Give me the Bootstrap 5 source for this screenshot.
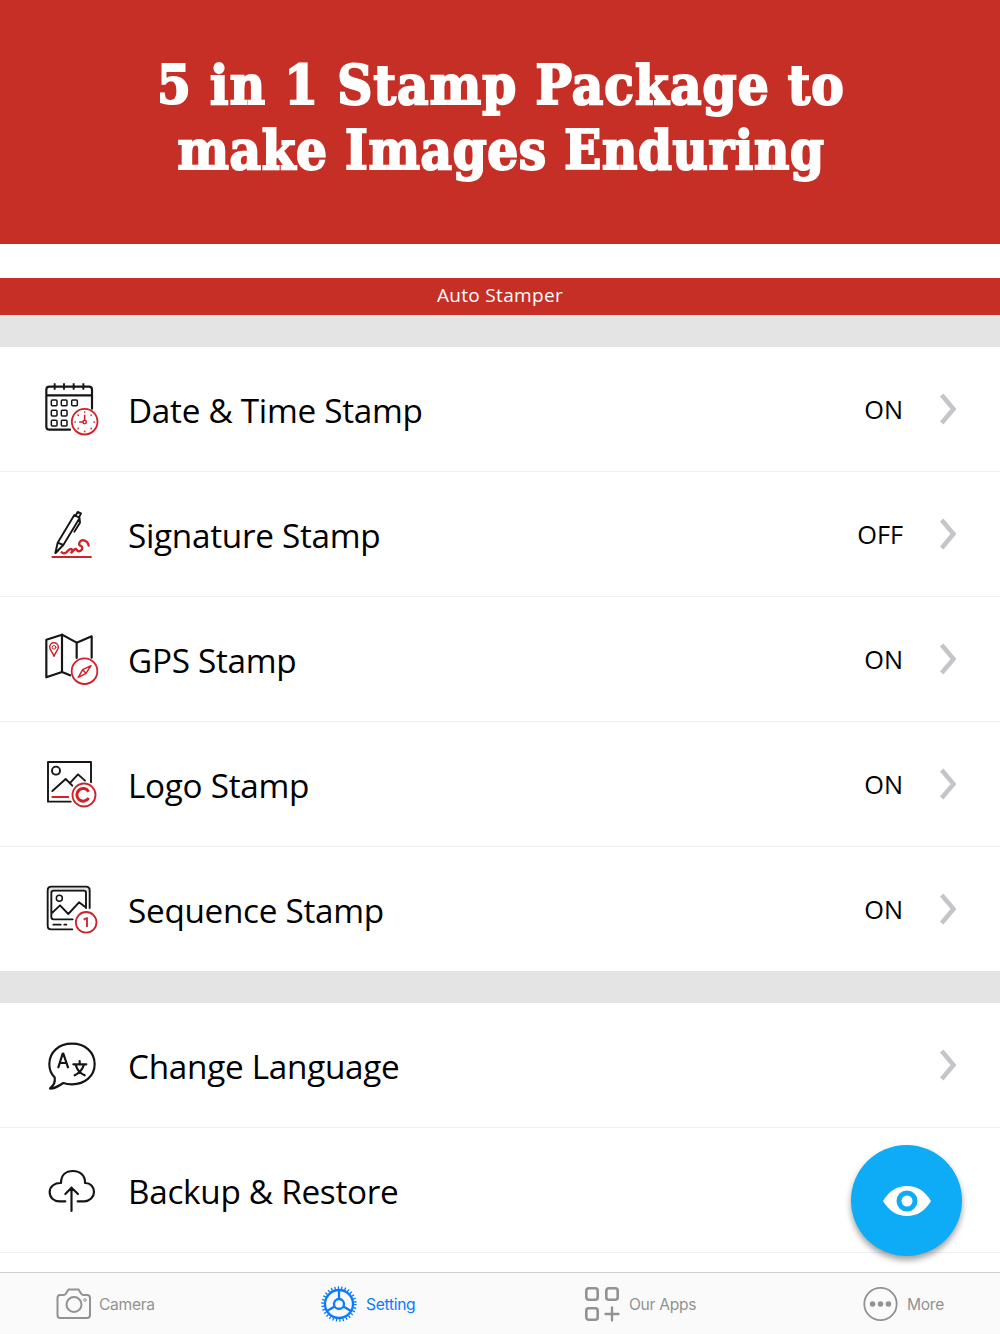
<!DOCTYPE html>
<html lang="en">
<head>
<meta charset="utf-8">
<title>Auto Stamper</title>
<meta name="viewport" content="width=device-width, initial-scale=1">
<link href="https://cdn.jsdelivr.net/npm/bootstrap@5.3.0/dist/css/bootstrap.min.css" rel="stylesheet">
<style>
  body { font-family: "Open Sans", "Noto Sans", sans-serif; color: #000; }
  .screen { width: 1000px; height: 1334px; overflow: hidden; }
  .brand-red { background: #c62f26; color: #fff; }
  .promo { height: 244px; padding: 53px 0 0 2px; }
  .promo h1 { font: 700 54px/65px "DejaVu Serif Condensed", "DejaVu Serif", serif; font-stretch: condensed; margin: 0; -webkit-text-stroke: 2px #fff; }
  .promo .line-a { letter-spacing: 1.15px; }
  .promo .line-b { letter-spacing: .65px; }
  .gap-strip { height: 34px; }
  .title-bar { height: 37px; font-size: 19px; font-weight: 500; line-height: 34px; letter-spacing: .33px; }
  .divider-band { height: 32px; background: #e4e4e4; }
  .divider-band.second { height: 31px; }
  .setting { height: 125px; border: 0; border-bottom: 1px solid #f1f1f4 !important; border-radius: 0; padding: 0 44px 0 30px; color: #000; }
  .setting.last-item { border-bottom-color: #e4e4e4 !important; }
  .setting svg.glyph { width: 90px; height: 80px; flex: none; margin-right: 8px; }
  .setting .label { font-size: 33.3px; line-height: 40px; padding-top: 1px; letter-spacing: -.29px; }
  .setting .state { font-size: 25.3px; line-height: 32px; margin-right: 37px; margin-top: -1px; }
  .setting svg.chev { width: 16px; height: 32px; flex: none; }
  .tabs { height: 62px; background: #fafafa; border-top: 1px solid #cfcfcf; z-index: 2; }
  .tabs .tab-item { color: #929292; font: 400 15.6px/20px Inter, Roboto, sans-serif; letter-spacing: -.3px; text-decoration: none; }
  .tabs .tab-item span { padding-top: 3px; }
  .tabs .tab-item.active { color: #0a7bff; }
  .eye-btn { right: 38px; bottom: 78px; width: 111px; height: 111px; background: #0eabf6; box-shadow: 0 4px 6px rgba(0,0,0,.38); z-index: 3; }
  .k { fill: none; stroke: #151515; stroke-width: 6.5; stroke-linejoin: round; stroke-linecap: round; }
  .r { fill: none; stroke: #cf2229; stroke-width: 5.5; stroke-linejoin: round; stroke-linecap: round; }
  .thin { stroke-width: 4.5; }
  .mid { stroke-width: 5.7; }
  .patch { fill: #fff; }
  .butt { stroke-linecap: butt; }
</style>
</head>
<body class="bg-white">
<div class="screen position-relative d-flex flex-column mx-auto">
  <header class="promo brand-red text-center flex-shrink-0">
    <h1><span class="line-a">5 in 1 Stamp Package to</span><br><span class="line-b">make Images Enduring</span></h1>
  </header>
  <div class="gap-strip flex-shrink-0"></div>
  <div class="title-bar brand-red text-center flex-shrink-0">Auto Stamper</div>
  <div class="divider-band flex-shrink-0"></div>

  <main class="flex-grow-1 overflow-hidden">
    <div class="list-group list-group-flush">
      <div class="setting list-group-item d-flex align-items-center">
        <svg class="glyph" viewBox="0 -3 270 240">
          <path class="k" d="M120 179H58q-9 0-9-9V59q0-9 9-9H177q9 0 9 9V116M49 76H186"/>
          <path class="k butt mid" d="M74 40V59M102 40V59M131 40V59M160 40V59"/>
          <g class="k thin"><rect x="64" y="90" width="17" height="17" rx="3"/><rect x="94" y="90" width="17" height="17" rx="3"/><rect x="125" y="90" width="17" height="17" rx="3"/><rect x="64" y="121" width="17" height="17" rx="3"/><rect x="94" y="121" width="17" height="17" rx="3"/><rect x="64" y="151" width="17" height="17" rx="3"/><rect x="94" y="151" width="17" height="17" rx="3"/></g>
          <circle class="r patch" cx="164" cy="155" r="38.500"/>
          <path class="r thin" d="M164 136V150M149 156H158M164 126v1M164 184v1M135 156h1M192 156h1M144 135l1 1M184 135l-1 1M144 176l1-1M184 176l-1-1"/>
          <circle class="r thin" cx="164" cy="156" r="5"/>
        </svg>
        <span class="label">Date &amp; Time Stamp</span><span class="state ms-auto">ON</span>
        <svg class="chev" viewBox="0 0 16 32"><path d="M1.700 2L13.500 16 1.700 30" fill="none" stroke="#c4c4c9" stroke-width="4.500"/></svg>
      </div>
      <div class="setting list-group-item d-flex align-items-center">
        <svg class="glyph" viewBox="0 -3 270 240">
          <path class="k mid" d="M76 174L83 143 133 60 149 69 100 150ZM83 143L100 150M77 174L85 166M138 60L143 51 153 55 147 67M149 72L150 83 133 110"/>
          <path class="r" style="stroke-width:7" d="M95 172C99 177 107 175 111 170S122 159 126 164 121 174 125 172 134 158 139 163 143 171 151 168C160 162 158 154 151 152 144 148 148 140 155 136 167 134 175 143 176 152 173 164"/>
          <path class="r butt" d="M65 186H185"/>
        </svg>
        <span class="label">Signature Stamp</span><span class="state ms-auto">OFF</span>
        <svg class="chev" viewBox="0 0 16 32"><path d="M1.700 2L13.500 16 1.700 30" fill="none" stroke="#c4c4c9" stroke-width="4.500"/></svg>
      </div>
      <div class="setting list-group-item d-flex align-items-center">
        <svg class="glyph" viewBox="0 -3 270 240">
          <path class="k" d="M120 166L96 156 49 172V59L96 44 140 68 185 49V113M96 44V156M140 68V114"/>
          <path class="r thin" d="M72 109C68 96 59 91 59 81a13 13 0 0 1 26 0C85 91 76 96 72 109Z"/>
          <circle class="r" style="stroke-width:3" cx="72" cy="82" r="5.500"/>
          <circle class="r patch" cx="163.500" cy="153.500" r="38.500"/>
          <path class="r thin" d="M183 137L168 160 145 172 158 149ZM158 149L168 160"/>
        </svg>
        <span class="label">GPS Stamp</span><span class="state ms-auto">ON</span>
        <svg class="chev" viewBox="0 0 16 32"><path d="M1.700 2L13.500 16 1.700 30" fill="none" stroke="#c4c4c9" stroke-width="4.500"/></svg>
      </div>
      <div class="setting list-group-item d-flex align-items-center">
        <svg class="glyph" viewBox="0 -3 270 240">
          <path class="k mid" d="M122 170H54V51H183V112"/>
          <circle class="k mid" cx="78" cy="77" r="12"/>
          <path class="k mid" d="M67 138L107 102 127 122M121 113L144 88 165 107"/>
          <path class="r" d="M67 156H115"/>
          <circle class="r patch" cx="162" cy="150" r="34.500"/>
          <path class="r butt" style="stroke-width:9" d="M176 140A19 19 0 1 0 176 159"/>
        </svg>
        <span class="label">Logo Stamp</span><span class="state ms-auto">ON</span>
        <svg class="chev" viewBox="0 0 16 32"><path d="M1.700 2L13.500 16 1.700 30" fill="none" stroke="#c4c4c9" stroke-width="4.500"/></svg>
      </div>
      <div class="setting last-item list-group-item d-flex align-items-center">
        <svg class="glyph" viewBox="0 -3 270 240">
          <path d="M53 60q0-9 9-9H170q9 0 9 9v5H53z" fill="#dfe2e0"/>
          <path class="k mid" d="M127 178H64q-11 0-11-11V61q0-11 11-11H168q11 0 11 11V114"/>
          <path class="k mid" d="M128 148H71q-7 0-7-7V69q0-7 7-7H161q7 0 7 7V114M64 131L90 106 115 132 147 97 167 112M70 164H92M103 164h6"/>
          <circle class="k thin" cx="88" cy="85" r="9"/>
          <circle class="r patch" cx="168.500" cy="157" r="31"/>
          <path class="r butt" d="M161 149L171 144V171"/>
        </svg>
        <span class="label">Sequence Stamp</span><span class="state ms-auto">ON</span>
        <svg class="chev" viewBox="0 0 16 32"><path d="M1.700 2L13.500 16 1.700 30" fill="none" stroke="#c4c4c9" stroke-width="4.500"/></svg>
      </div>
    </div>
    <div class="divider-band second"></div>
    <div class="list-group list-group-flush">
      <div class="setting list-group-item d-flex align-items-center">
        <svg class="glyph" viewBox="0 -15 270 240">
          <path class="k" d="M60 175C71 167 77 159 74 142C64 133 58 119 58 102C58 66 87 41 126 41S194 66 194 102 165 163 126 163C117 163 108 162 100 159C88 167 74 176 61 176Z"/>
          <path class="k" d="M85 112L98 71H100L114 112M89 99H109M130 103H169M149 93V102M137 104C141 119 151 130 164 136M162 104C157 119 147 130 134 136"/>
        </svg>
        <span class="label">Change Language</span>
        <svg class="chev ms-auto" viewBox="0 0 16 32"><path d="M1.700 2L13.500 16 1.700 30" fill="none" stroke="#c4c4c9" stroke-width="4.500"/></svg>
      </div>
      <div class="setting list-group-item d-flex align-items-center">
        <svg class="glyph" viewBox="0 -15 270 240">
          <path class="k" d="M106 139H88C71 139 59 128 59 111S75 83 93 84C93 61 107 48 129 48S166 62 165 84C181 83 192 96 192 111S179 139 163 139H143M124.500 168V98M106 117L124.500 98 144 117"/>
        </svg>
        <span class="label">Backup &amp; Restore</span>
      </div>
    </div>
  </main>

  <button type="button" class="eye-btn btn rounded-circle border-0 p-0 position-absolute d-flex align-items-center justify-content-center" aria-label="Preview">
    <svg width="50" height="32" viewBox="0 0 50 32"><path d="M1 16C7 6 15 1 25 1s18 5 24 15C43 26 35 31 25 31S7 26 1 16Z" fill="#fff"/><circle cx="25" cy="16" r="8" fill="#fff" stroke="#0eabf6" stroke-width="5"/></svg>
  </button>

  <nav class="tabs position-relative d-flex flex-shrink-0" aria-label="Main">
    <a href="#" class="tab-item d-flex align-items-center" style="margin-left:56px;width:265px">
      <svg width="36" height="36" viewBox="0 0 36 36" fill="none" stroke="#929292" stroke-width="2"><path d="M4 9H7.500Q9 9 10 7.500L12.500 3.500H22.500L25 7.500Q26 9 27.500 9H31Q34 9 34 12V29Q34 32 31 32H4Q1.500 32 1.500 29V12Q1.500 9 4 9Z"/><circle cx="18" cy="18.500" r="7.500"/><circle cx="29" cy="14" r="1.300" stroke-width="1"/></svg>
      <span style="margin-left:7px">Camera</span></a>
    <a href="#" class="tab-item active d-flex align-items-center" style="width:263px">
      <svg width="36" height="36" viewBox="0 0 36 36" fill="none" stroke="#0a7bff" stroke-width="2.300"><circle cx="18" cy="18" r="14"/><circle cx="18" cy="18" r="5"/><path d="M18 13V4M13.600 20.500L6 25M22.400 20.500L30 25"/><circle cx="18" cy="18" r="16.300" stroke-width="2.800" stroke-dasharray="1.300 2.114"/></svg>
      <span style="margin-left:9px">Setting</span></a>
    <a href="#" class="tab-item d-flex align-items-center" style="width:278px">
      <svg width="36" height="36" viewBox="0 0 36 36" fill="none" stroke="#929292" stroke-width="2.600"><rect x="2.300" y="2.300" width="11.400" height="11.400" rx="2.500"/><rect x="22.300" y="2.300" width="11.400" height="11.400" rx="2.500"/><rect x="2.300" y="22.300" width="11.400" height="11.400" rx="2.500"/><path d="M28 21.500V34.500M21.500 28H34.500" stroke-linecap="round" stroke-width="2.300"/></svg>
      <span style="margin-left:9px">Our Apps</span></a>
    <a href="#" class="tab-item d-flex align-items-center">
      <svg width="36" height="36" viewBox="0 0 36 36"><circle cx="18.500" cy="18" r="16.200" fill="none" stroke="#929292" stroke-width="1.800"/><g fill="#929292"><circle cx="10.600" cy="18" r="2.800"/><circle cx="18.500" cy="18" r="2.800"/><circle cx="26.400" cy="18" r="2.800"/></g></svg>
      <span style="margin-left:9px">More</span></a>
  </nav>
</div>
<script src="https://cdn.jsdelivr.net/npm/bootstrap@5.3.0/dist/js/bootstrap.bundle.min.js"></script>
</body>
</html>
